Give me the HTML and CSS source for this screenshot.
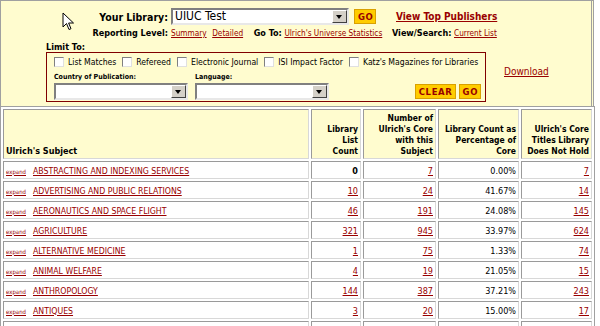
FILE: index.html
```html
<!DOCTYPE html>
<html lang="en">
<head>
    <meta charset="UTF-8">
    <title>Ulrich's Subject Analysis</title>
    <link rel="stylesheet" href="styles.css">
</head>
<body>
<div class="page">
    <div class="top">
        <svg class="cursor" width="13" height="20" viewBox="0 0 13 20">
            <path d="M1 1 L1 15 L4.5 11.5 L7 17.5 L9 16.7 L6.6 11 L11.5 11 Z" fill="#fff" stroke="#000" stroke-width="1" stroke-linejoin="round"/>
        </svg>
        <div class="lib-grid">
            <div class="lib-label">Your Library:</div>
            <div class="lib-pick">
                <span class="select wide"><span class="select-text big">UIUC Test</span><span class="arrow"></span></span>
                <button type="button" class="btn">GO</button>
            </div>
            <div><a href="#" class="top-link">View Top Publishers</a></div>

            <div class="sub-label">Reporting Level:</div>
            <div class="sub-row">
                <a href="#">Summary</a>
                <a href="#">Detailed</a>
                <b class="goto">Go To:</b>
                <a href="#">Ulrich's Universe Statistics</a>
            </div>
            <div class="sub-row"><b>View/Search:</b> <a href="#">Current List</a></div>
        </div>

        <div class="limit">
            <div class="limit-title">Limit To:</div>
            <div class="limit-row">
                <div class="limit-box">
                    <div class="checks">
                        <label><span class="check"></span>List Matches</label>
                        <label><span class="check"></span>Refereed</label>
                        <label><span class="check"></span>Electronic Journal</label>
                        <label><span class="check"></span>ISI Impact Factor</label>
                        <label><span class="check"></span>Katz's Magazines for Libraries</label>
                    </div>
                    <div class="filters">
                        <div class="filter">
                            <div class="filter-label">Country of Publication:</div>
                            <span class="select narrow"><span class="select-text"></span><span class="arrow"></span></span>
                        </div>
                        <div class="filter">
                            <div class="filter-label">Language:</div>
                            <span class="select narrow"><span class="select-text"></span><span class="arrow"></span></span>
                        </div>
                        <div class="filter-buttons">
                            <button type="button" class="btn">CLEAR</button>
                            <button type="button" class="btn">GO</button>
                        </div>
                    </div>
                </div>
                <a href="#" class="download">Download</a>
            </div>
        </div>
    </div>

    <table class="subjects">
        <thead>
            <tr>
                <th class="subject-head">Ulrich's Subject</th>
                <th>Library<br>List<br>Count</th>
                <th>Number of<br>Ulrich's Core<br>with this<br>Subject</th>
                <th>Library Count as<br>Percentage of<br>Core</th>
                <th>Ulrich's Core<br>Titles Library<br>Does Not Hold</th>
            </tr>
        </thead>
        <tbody id="rows"></tbody>
    </table>
</div>

<script>
    const subjects = [
        ['ABSTRACTING AND INDEXING SERVICES', 0, 7, '0.00%', 7],
        ['ADVERTISING AND PUBLIC RELATIONS', 10, 24, '41.67%', 14],
        ['AERONAUTICS AND SPACE FLIGHT', 46, 191, '24.08%', 145],
        ['AGRICULTURE', 321, 945, '33.97%', 624],
        ['ALTERNATIVE MEDICINE', 1, 75, '1.33%', 74],
        ['ANIMAL WELFARE', 4, 19, '21.05%', 15],
        ['ANTHROPOLOGY', 144, 387, '37.21%', 243],
        ['ANTIQUES', 3, 20, '15.00%', 17],
        ['ARCHAEOLOGY', 88, 310, '28.39%', 222]
    ];

    const tbody = document.getElementById('rows');
    subjects.forEach(s => {
        const tr = document.createElement('tr');
        const count = s[1] === 0 ? '<b>0</b>' : `<a href="#">${s[1]}</a>`;
        tr.innerHTML = `
            <td class="subject"><a href="#" class="expand">expand</a><a href="#">${s[0]}</a></td>
            <td>${count}</td>
            <td><a href="#">${s[2]}</a></td>
            <td>${s[3]}</td>
            <td><a href="#">${s[4]}</a></td>
        `;
        tbody.appendChild(tr);
    });
</script>
</body>
</html>
```

FILE: styles.css
```css
body {
    margin: 0;
    font-family: "DejaVu Sans Condensed", Tahoma, "Liberation Sans", sans-serif;
    font-size: 9px;
    color: #000;
    background: #fff;
}
a {
    color: #990000;
}
.page {
    width: 597px;
}
.top {
    position: relative;
    height: 106px;
    box-sizing: border-box;
    padding-top: 7px;
    background: #fffccf;
    border: 1px solid #a0a0a0;
    border-bottom: none;
    border-right: 3px double #a0a0a0;
    width: 594px;
}
.cursor {
    position: absolute;
    left: 61px;
    top: 11px;
}
.lib-grid {
    display: grid;
    grid-template-columns: 167px 218px auto;
    column-gap: 3px;
    align-items: center;
}
.lib-label {
    text-align: right;
    font-weight: bold;
    font-size: 10.5px;
}
.lib-pick {
    display: flex;
    align-items: center;
    gap: 5px;
}
.top-link {
    font-weight: bold;
    font-size: 10px;
    margin-left: 4px;
}
.sub-label {
    text-align: right;
    font-weight: bold;
    margin-top: 3px;
}
.sub-row {
    margin-top: 3px;
    white-space: nowrap;
}
.sub-row a {
    font-size: 8.2px;
    margin-right: 3px;
}
.goto {
    margin-left: 5px;
}
.select {
    position: relative;
    display: inline-block;
    height: 17px;
    box-sizing: border-box;
    background: #fff;
    border: 2px solid;
    border-color: #808080 #e8e8e8 #e8e8e8 #808080;
    vertical-align: middle;
}
.select.wide {
    width: 178px;
}
.select.narrow {
    width: 134px;
}
.select-text {
    display: block;
    padding-left: 2px;
    line-height: 13px;
}
.select-text.big {
    font-size: 12px;
}
.arrow {
    position: absolute;
    right: 0;
    top: 0;
    width: 15px;
    height: 13px;
    box-sizing: border-box;
    background: #d4d0c8;
    border: 1px solid;
    border-color: #fff #404040 #404040 #fff;
}
.arrow::after {
    content: "";
    position: absolute;
    left: 3px;
    top: 4px;
    border: 3.5px solid transparent;
    border-top: 4px solid #000;
    border-bottom: none;
}
.btn {
    font-family: inherit;
    font-size: 9.5px;
    font-weight: bold;
    letter-spacing: 0.6px;
    color: #990000;
    background: #ffcc00;
    border: 1px solid #d9a000;
    padding: 0 2px 0 3px;
    height: 15px;
    line-height: 13px;
    cursor: pointer;
}
.limit {
    margin-left: 45px;
    margin-top: 4px;
}
.limit-title {
    font-weight: bold;
    line-height: 10px;
}
.limit-row {
    display: flex;
    align-items: center;
    gap: 18px;
}
.limit-box {
    width: 440px;
    height: 50px;
    box-sizing: border-box;
    border: 1px solid #800000;
    padding: 3px 4px 0 7px;
}
.checks {
    display: flex;
    gap: 6px;
    font-size: 8.6px;
}
.checks label {
    display: flex;
    align-items: center;
    gap: 4px;
    white-space: nowrap;
    line-height: 12px;
}
.check {
    display: inline-block;
    width: 10px;
    height: 10px;
    box-sizing: border-box;
    background: #fff;
    border: 1px solid;
    border-color: #808080 #e0e0e0 #e0e0e0 #808080;
}
.filters {
    display: flex;
    align-items: flex-end;
    gap: 7px;
    margin-top: 4px;
}
.filter-label {
    font-size: 7px;
    font-weight: bold;
    line-height: 10px;
    margin-bottom: 1px;
}
.filter-buttons {
    margin-left: auto;
    display: flex;
    gap: 3px;
    margin-bottom: 1px;
}
.download {
    font-size: 10px;
    margin-top: -12px;
}
.subjects {
    border: 1px solid #a0a0a0;
    border-spacing: 2px;
    width: 595px;
    table-layout: fixed;
}
.subjects th,
.subjects td {
    border: 1px solid;
    border-color: #9a9a9a #d8d8d8 #d8d8d8 #9a9a9a;
    padding: 0 2px;
    text-align: right;
}
.subjects th {
    background: #fffccf;
    vertical-align: bottom;
    font-size: 8.5px;
    line-height: 11px;
    height: 47px;
    padding-bottom: 1px;
    white-space: nowrap;
}
.subjects th:nth-child(1) { width: 300px; text-align: left; font-size: 9px; }
.subjects th:nth-child(2) { width: 44px; }
.subjects th:nth-child(3) { width: 67px; }
.subjects th:nth-child(4) { width: 75px; }
.subjects th:nth-child(5) { width: 65px; }
.subjects td {
    height: 15px;
    font-size: 9px;
    padding-top: 1px;
}
.subjects td.subject {
    text-align: left;
    font-size: 8.7px;
}
.expand {
    font-size: 6px;
    margin-right: 7px;
}
```
